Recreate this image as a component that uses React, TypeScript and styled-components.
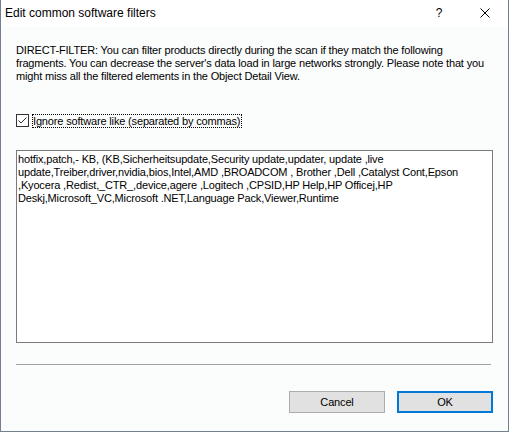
import React from "react";
import styled, { createGlobalStyle } from "styled-components";

const Global = createGlobalStyle`
  html, body { margin: 0; padding: 0; background: #ffffff; }
  body { font-family: "Liberation Sans", Arial, sans-serif; }
  * { box-sizing: border-box; }
`;

const Window = styled.div`
  width: 509px;
  height: 432px;
  border: 1px solid #74808f;
  border-top: none;
  display: flex;
  flex-direction: column;
  background: #fbfcfc;
  color: #000;
`;

const TitleBar = styled.div`
  height: 27px;
  background: #ffffff;
  display: flex;
  align-items: stretch;
`;

const Title = styled.div`
  flex: 1;
  padding-left: 4px;
  font-size: 12px;
  line-height: 27px;
  padding-bottom: 1px;
`;

const CaptionButton = styled.div`
  width: 46px;
  display: flex;
  align-items: center;
  justify-content: center;
  font-size: 12px;
  padding-bottom: 1px;
`;

const Body = styled.div`
  flex: 1;
  display: flex;
  flex-direction: column;
  padding: 17px 15px 0 15px;
  font-size: 11px;
  letter-spacing: -0.16px;
`;

const Intro = styled.p`
  margin: 0;
  line-height: 13px;
  white-space: nowrap;
`;

const CheckRow = styled.label`
  margin-top: 31px;
  height: 13px;
  display: flex;
  align-items: center;
  gap: 2px;
`;

const Box = styled.span`
  width: 13px;
  height: 13px;
  border: 1px solid #333333;
  background: #ffffff;
  display: flex;
  align-items: center;
  justify-content: center;
`;

const LabelText = styled.span`
  border: 1px dotted #000;
  height: 14px;
  line-height: 12px;
  margin-left: 1px;
  padding-right: 1px;
`;

const TextBox = styled.div`
  margin-top: 23px;
  height: 193px;
  width: 477px;
  border: 1px solid #7a7a7a;
  background: #ffffff;
  padding: 2px 2px 0 1px;
  line-height: 13px;
  white-space: pre;
`;

const Separator = styled.div`
  margin-top: 21px;
  width: 475px;
  height: 1px;
  background: #a0a0a0;
`;

const ButtonRow = styled.div`
  margin-top: 26px;
  display: flex;
  justify-content: flex-end;
  gap: 12px;
`;

const Button = styled.button<{ $primary?: boolean }>`
  width: 96px;
  height: 22px;
  background: #e1e1e1;
  border: ${(p) => (p.$primary ? "2px solid #0078d7" : "1px solid #adadad")};
  font-family: "Liberation Sans", Arial, sans-serif;
  font-size: 11px;
  letter-spacing: -0.16px;
  color: #000;
  padding: 0;
  margin: 0;
`;

const introLines = [
  "DIRECT-FILTER: You can filter products directly during the scan if they match the following",
  "fragments. You can decrease the server's data load in large networks strongly. Please note that you",
  "might miss all the filtered elements in the Object Detail View.",
];

const filterLines = [
  "hotfix,patch,- KB, (KB,Sicherheitsupdate,Security update,updater, update ,live",
  "update,Treiber,driver,nvidia,bios,Intel,AMD ,BROADCOM , Brother ,Dell ,Catalyst Cont,Epson",
  ",Kyocera ,Redist,_CTR_,device,agere ,Logitech ,CPSID,HP Help,HP Officej,HP",
  "Deskj,Microsoft_VC,Microsoft .NET,Language Pack,Viewer,Runtime",
];

export default function App() {
  return (
    <>
      <Global />
      <Window>
        <TitleBar>
          <Title>Edit common software filters</Title>
          <CaptionButton>?</CaptionButton>
          <CaptionButton>
            <svg width="10" height="10" viewBox="0 0 10 10">
              <path d="M0.5 0.5 L9.5 9.5 M9.5 0.5 L0.5 9.5" stroke="#000" strokeWidth="1" fill="none" />
            </svg>
          </CaptionButton>
        </TitleBar>
        <Body>
          <Intro>
            {introLines.map((l, i) => (
              <React.Fragment key={i}>
                {l}
                {i < introLines.length - 1 && <br />}
              </React.Fragment>
            ))}
          </Intro>
          <CheckRow>
            <Box>
              <svg width="11" height="11" viewBox="0 0 11 11">
                <path d="M1.5 5.5 L4 8 L9.5 2.5" stroke="#333" strokeWidth="1" fill="none" />
              </svg>
            </Box>
            <LabelText>Ignore software like (separated by commas)</LabelText>
          </CheckRow>
          <TextBox>{filterLines.join("\n")}</TextBox>
          <Separator />
          <ButtonRow>
            <Button>Cancel</Button>
            <Button $primary>OK</Button>
          </ButtonRow>
        </Body>
      </Window>
    </>
  );
}
